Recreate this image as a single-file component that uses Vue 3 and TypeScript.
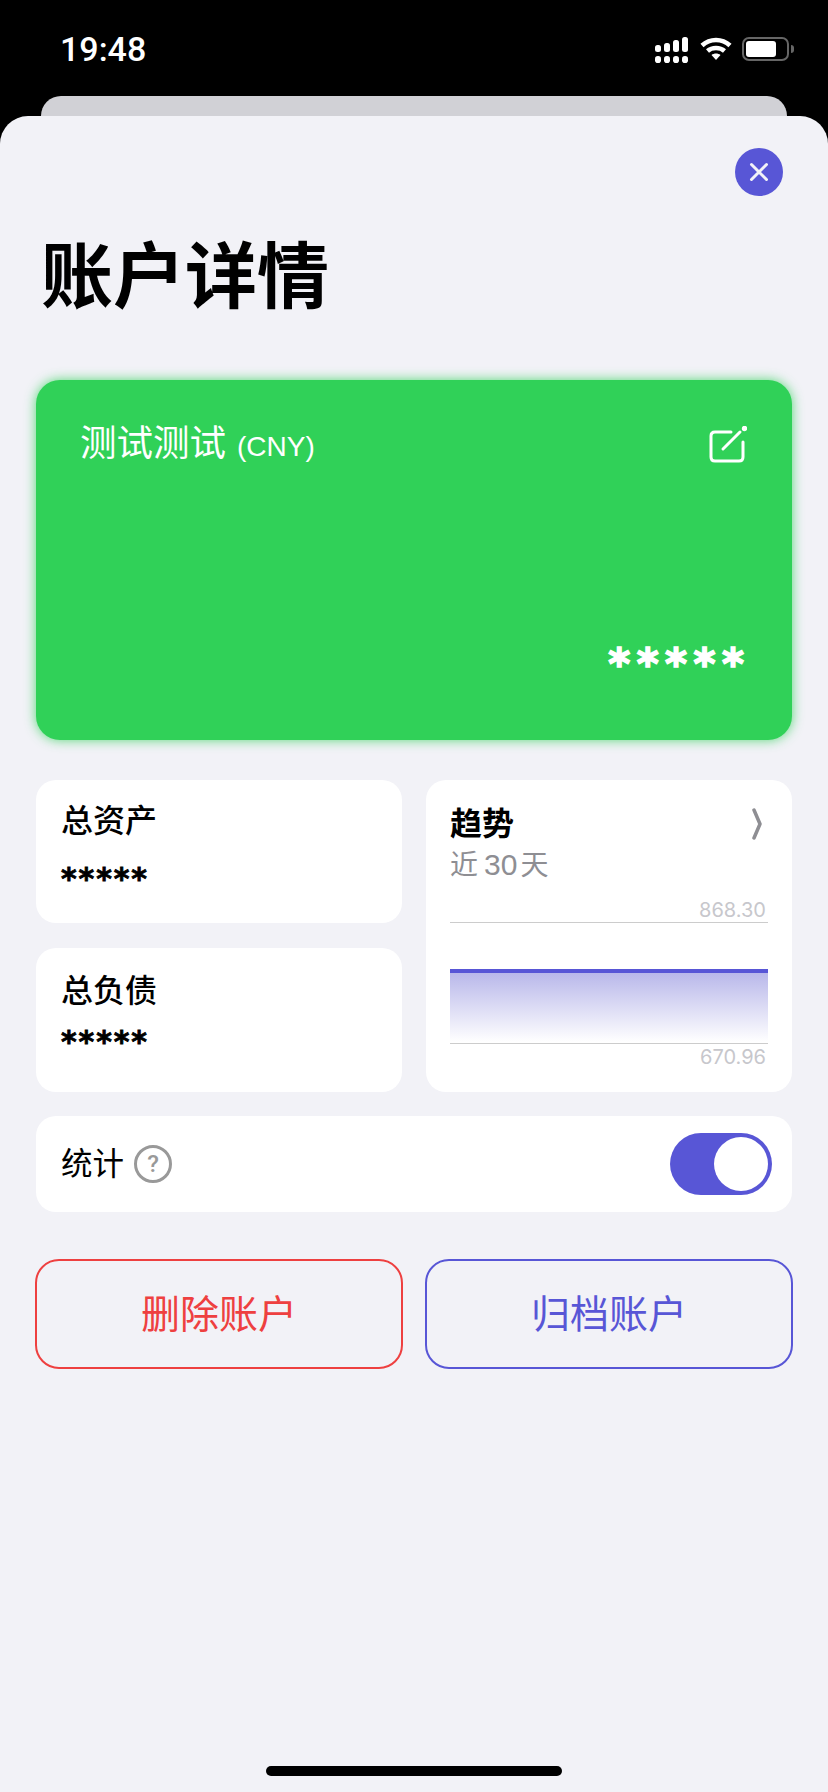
<template>
  <div class="screen">
    <div class="status-bar">
      <span class="time">19:48</span>
      <div class="status-icons">
        <svg class="signal" width="34" height="26" viewBox="0 0 34 26" fill="#fff">
          <rect x="0" y="8" width="6" height="7" rx="2.5" />
          <rect x="9" y="6" width="6" height="9" rx="2.5" />
          <rect x="18" y="3" width="6" height="12" rx="2.5" />
          <rect x="27" y="0" width="6" height="15" rx="2.5" />
          <rect x="0" y="19" width="6" height="7" rx="2.8" />
          <rect x="9" y="19" width="6" height="7" rx="2.8" />
          <rect x="18" y="19" width="6" height="7" rx="2.8" />
          <rect x="27" y="19" width="6" height="7" rx="2.8" />
        </svg>
        <svg class="wifi" width="32" height="24" viewBox="0 0 32 24" fill="none" stroke="#fff" stroke-width="4.5">
          <path d="M2 8.5 C10 1 22 1 30 8.5" />
          <path d="M7.5 14 C12 10 20 10 24.5 14" />
          <path d="M11.5 18 L16 23 L20.5 18 C18 16 14 16 11.5 18 Z" fill="#fff" stroke="none" />
        </svg>
        <div class="battery">
          <div class="battery-body"><div class="battery-level"></div></div>
          <div class="battery-cap"></div>
        </div>
      </div>
    </div>
    <div class="sheet-back"></div>
    <div class="sheet">
      <button class="close">
        <svg width="20" height="20" viewBox="0 0 20 20" stroke="#f2f2f7" stroke-width="3" stroke-linecap="round">
          <path d="M2.5 2.5 L17.5 17.5 M17.5 2.5 L2.5 17.5" />
        </svg>
      </button>
      <h1 class="title">账户详情</h1>

      <div class="account-card">
        <div class="card-head">
          <div class="card-name">测试测试<span class="currency">(CNY)</span></div>
          <svg class="edit" width="38" height="38" viewBox="0 0 38 38" fill="none" stroke="#fff" stroke-width="3" stroke-linecap="round">
            <path d="M22 6 H6 Q2 6 2 10 V31 Q2 35 6 35 H30 Q34 35 34 31 V16" />
            <path d="M14 23 L31 6" />
            <circle cx="35.5" cy="2.5" r="1.2" fill="#fff" />
          </svg>
        </div>
        <div class="card-amount">*****</div>
      </div>

      <div class="summary">
        <div class="panel asset">
          <div class="panel-title">总资产</div>
          <div class="mask">*****</div>
        </div>
        <div class="panel debt">
          <div class="panel-title">总负债</div>
          <div class="mask">*****</div>
        </div>
        <div class="panel trend">
          <div class="trend-head">
            <span class="trend-title">趋势</span>
            <svg width="10" height="32" viewBox="0 0 10 32" fill="none" stroke="#8e8e93" stroke-width="3.5" stroke-linecap="round" stroke-linejoin="round">
              <path d="M2 2 L8 16 L2 30" />
            </svg>
          </div>
          <div class="trend-sub">近<span class="num">30</span>天</div>
          <div class="chart">
            <div class="chart-label">{{ chart.max }}</div>
            <div class="plot">
              <div class="fill"></div>
            </div>
            <div class="chart-label low">{{ chart.min }}</div>
          </div>
        </div>
      </div>

      <div class="stat-row">
        <div class="stat-label">
          <span class="stat-text">统计</span>
          <span class="help">?</span>
        </div>
        <div class="toggle"><div class="knob"></div></div>
      </div>

      <div class="actions">
        <button class="action danger">删除账户</button>
        <button class="action archive">归档账户</button>
      </div>

      <div class="home-bar"></div>
    </div>
  </div>
</template>

<script setup lang="ts">
const chart = { max: '868.30', min: '670.96' }
</script>

<style>
html,
body {
  margin: 0;
  background: #000;
}
</style>

<style scoped>
.screen {
  width: 828px;
  height: 1792px;
  display: flex;
  flex-direction: column;
  background: #000;
  overflow: hidden;
  font-family: 'Liberation Sans', 'Noto Sans CJK SC', sans-serif;
  color: #000;
}

.status-bar {
  height: 96px;
  flex: none;
  display: flex;
  justify-content: space-between;
  padding: 29px 34px 0 60px;
  box-sizing: border-box;
}

.time {
  color: #fff;
  font-family: Roboto, 'Liberation Sans', sans-serif;
  font-weight: 500;
  font-size: 34px;
  line-height: 40px;
  height: 40px;
}

.status-icons {
  display: flex;
  align-items: flex-start;
  padding-top: 8px;
}

.wifi {
  margin-left: 11px;
}

.battery {
  display: flex;
  align-items: center;
  margin-left: 10px;
  height: 24px;
}

.battery-body {
  width: 47px;
  height: 24px;
  box-sizing: border-box;
  border: 2px solid #666;
  border-radius: 7px;
  padding: 2px;
}

.battery-level {
  width: 30px;
  height: 16px;
  background: #fff;
  border-radius: 3px;
}

.battery-cap {
  width: 3px;
  height: 8px;
  margin-left: 2px;
  background: #666;
  border-radius: 0 3px 3px 0;
}

.sheet-back {
  flex: none;
  height: 20px;
  margin: 0 41px;
  background: #d1d1d6;
  border-radius: 20px 20px 0 0;
}

.sheet {
  flex: 1;
  display: flex;
  flex-direction: column;
  background: #f2f2f7;
  border-radius: 28px 28px 0 0;
  padding: 32px 36px 0;
}

.close {
  align-self: flex-end;
  width: 48px;
  height: 48px;
  margin-right: 9px;
  padding: 0;
  border: none;
  border-radius: 50%;
  background: #5856d6;
  display: flex;
  align-items: center;
  justify-content: center;
}

.title {
  margin: 39px 0 0 5px;
  font-size: 72px;
  line-height: 84px;
  font-weight: 700;
}

.account-card {
  margin-top: 61px;
  height: 360px;
  box-sizing: border-box;
  padding: 40px 48px 0 44px;
  background: #30d158;
  border-radius: 24px;
  box-shadow: 0 0 12px rgba(48, 209, 88, 0.8);
  color: #fff;
}

.card-head {
  display: flex;
  justify-content: space-between;
  align-items: flex-start;
}

.card-name {
  padding-top: 1px;
  font-size: 36.5px;
  line-height: 46px;
}

.currency {
  font-size: 28px;
  margin-left: 11px;
}

.edit {
  margin: 6px -3px 0 0;
}

.card-amount {
  margin: 170px -6.5px 0 0;
  text-align: right;
  font-family: 'DejaVu Sans', sans-serif;
  font-size: 42px;
  font-weight: 700;
  line-height: 50px;
  letter-spacing: 6.5px;
  -webkit-text-stroke: 1.6px #fff;
}

.summary {
  margin-top: 40px;
  display: grid;
  grid-template-columns: 366px 366px;
  grid-template-rows: 143px 144px;
  column-gap: 24px;
  row-gap: 25px;
}

.panel {
  background: #fff;
  border-radius: 20px;
  padding: 0 25px;
}

.panel-title {
  font-size: 32px;
  font-weight: 500;
  line-height: 40px;
}

.asset {
  padding-top: 21px;
}

.debt {
  padding-top: 23px;
}

.mask {
  font-family: 'DejaVu Sans', sans-serif;
  font-size: 30px;
  font-weight: 700;
  letter-spacing: 1.9px;
  line-height: 36px;
  -webkit-text-stroke: 0.8px #000;
}

.asset .mask {
  margin-top: 20px;
}

.debt .mask {
  margin-top: 13px;
}

.trend {
  grid-column: 2;
  grid-row: 1 / 3;
  padding: 24px 24px 0;
}

.trend-head {
  display: flex;
  justify-content: space-between;
  align-items: center;
  height: 40px;
  padding-right: 6px;
}

.trend-title {
  font-size: 32px;
  font-weight: 700;
  line-height: 40px;
}

.trend-sub {
  font-size: 28px;
  line-height: 42px;
  color: #8e8e93;
}

.trend-sub .num {
  margin: 0 3px 0 6px;
  font-size: 30px;
}

.chart {
  margin-top: 12px;
}

.chart-label {
  font-family: Inter, 'Liberation Sans', sans-serif;
  font-size: 20px;
  line-height: 23px;
  color: #c7c7cc;
  text-align: right;
  padding-right: 2px;
}

.chart-label.low {
  margin-top: 2px;
}

.plot {
  height: 122px;
  box-sizing: border-box;
  border-top: 1.5px solid #ccc;
  border-bottom: 1.5px solid #ccc;
  padding-top: 46px;
}

.fill {
  height: 73px;
  box-sizing: border-box;
  border-top: 4px solid #5856d6;
  background: linear-gradient(#b9b8ea, #fff);
}

.stat-row {
  margin-top: 24px;
  height: 96px;
  display: flex;
  align-items: center;
  justify-content: space-between;
  background: #fff;
  border-radius: 20px;
  padding: 0 20px 0 25px;
}

.stat-label {
  display: flex;
  align-items: center;
  font-size: 31.5px;
}

.stat-text {
  padding-bottom: 6px;
}

.help {
  width: 38px;
  height: 38px;
  box-sizing: border-box;
  margin-left: 10px;
  border: 3px solid #999;
  border-radius: 50%;
  display: flex;
  align-items: center;
  justify-content: center;
  font-family: Roboto, sans-serif;
  font-size: 24px;
  font-weight: 500;
  color: #999;
}

.toggle {
  width: 102px;
  height: 62px;
  box-sizing: border-box;
  padding: 4px;
  display: flex;
  justify-content: flex-end;
  background: #5856d6;
  border-radius: 31px;
}

.knob {
  width: 54px;
  height: 54px;
  background: #fff;
  border-radius: 50%;
}

.actions {
  margin: 47px -1px 0;
  display: flex;
  justify-content: space-between;
}

.action {
  width: 368px;
  height: 110px;
  padding: 0 0 6px;
  background: transparent;
  border: 2px solid;
  border-radius: 24px;
  font-family: inherit;
  font-size: 39px;
}

.danger {
  color: #ee4040;
  border-color: #ee4040;
}

.archive {
  color: #5856d6;
  border-color: #5856d6;
}

.home-bar {
  margin-top: auto;
  margin-bottom: 16px;
  align-self: center;
  width: 296px;
  height: 10px;
  flex: none;
  background: #000;
  border-radius: 5px;
}
</style>
